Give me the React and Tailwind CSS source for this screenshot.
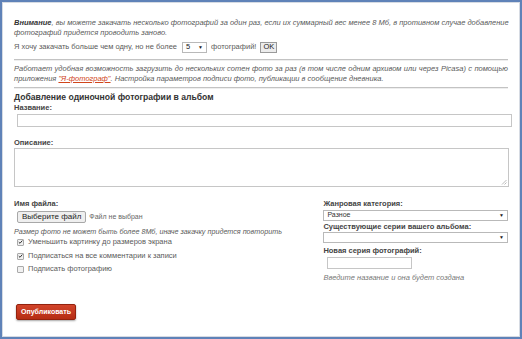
import React from "react";

function Check({ checked }) {
  return (
    <span className="inline-flex w-[7px] h-[7px] border border-[#a9a9a9] bg-[#f1f1f1] rounded-[1px] items-center justify-center shrink-0">
      {checked && (
        <svg width="6" height="6" viewBox="0 0 10 10">
          <path d="M1.5 5.2 L4 7.6 L8.6 2.2" fill="none" stroke="#333" strokeWidth="2" />
        </svg>
      )}
    </span>
  );
}

function Sel({ children, className }) {
  return (
    <div className={"flex items-center justify-between border border-[#b9b9b9] bg-white px-[3px] " + className}>
      <span>{children}</span>
      <span className="text-[5px] text-[#222]">▼</span>
    </div>
  );
}

export default function App() {
  const f = { fontFamily: '"Liberation Sans", Arial, sans-serif' };
  return (
    <div className="w-[522px] h-[339px] bg-white border-2 border-[#5f82b8]" style={f}>
      <div className="h-full border border-[#d6dbe3] bg-white">
        <div className="ml-[11px] w-[494px] pt-[15px] text-[#5a5a5a] text-[7.5px]">
          <div className="italic leading-[10px] h-[10px] whitespace-nowrap text-justify [text-align-last:justify]">
            <b className="text-[#333]">Внимание</b>, вы можете закачать несколько фотографий за один раз, если их суммарный вес менее 8 Мб, в противном случае добавление
          </div>
          <div className="italic leading-[10px] h-[10px]">фотографий придется проводить заново.</div>

          <div className="mt-[4px] flex items-center h-[10px] leading-[10px]">
            <span>Я хочу закачать больше чем одну, но не более</span>
            <Sel className="ml-[5px] w-[25px] h-[11px] text-[#222]">5</Sel>
            <span className="ml-[4px]">фотографий!</span>
            <span className="ml-[4px] h-[11px] px-[2px] border border-[#9a9a9a] bg-[#ececec] text-[#222] flex items-center">OK</span>
          </div>

          <div className="mt-[7px] border-t border-[#c3c3c3] shadow-[0_1px_0_#eeeeee]" />

          <div className="mt-[4px] italic leading-[10px] h-[10px] whitespace-nowrap text-justify [text-align-last:justify]">
            Работает удобная возможность загрузить до нескольких сотен фото за раз (в том числе одним архивом или через Picasa) с помощью
          </div>
          <div className="italic leading-[10px] h-[10px]">
            приложения <span className="underline text-[#d0451b]">"Я-фотограф"</span>. Настройка параметров подписи фото, публикации в сообщение дневника.
          </div>

          <div className="mt-[3px] border-t border-[#c3c3c3] shadow-[0_1px_0_#eeeeee]" />

          <div className="mt-[4px] h-[11px] leading-[11px] text-[8.6px] font-bold text-[#333]">
            Добавление одиночной фотографии в альбом
          </div>
          <div className="h-[9px] leading-[9px] font-bold text-[#444]">Название:</div>
          <div className="mt-[2px] ml-[3px] w-[495px] h-[13px] border border-[#c6c6c6] bg-white" />

          <div className="mt-[11px] h-[9px] leading-[9px] font-bold text-[#444]">Описание:</div>
          <div className="mt-[1px] w-[495px] h-[39px] border border-[#c6c6c6] bg-white flex items-end justify-end">
            <svg width="6" height="6" viewBox="0 0 6 6" className="mr-[1px] mb-[1px]">
              <path d="M5.5 1 L1 5.5 M5.5 3.5 L3.5 5.5" stroke="#aaa" strokeWidth="0.8" />
            </svg>
          </div>

          <div className="flex">
            <div className="w-[310px]">
              <div className="mt-[12px] h-[9px] leading-[9px] font-bold text-[#444]">Имя файла:</div>
              <div className="mt-[3px] flex items-center h-[12px]">
                <span className="ml-[3px] h-[12px] px-[4px] border border-[#a8a8a8] rounded-[2px] bg-[#efefef] text-[#222] text-[8px] flex items-center">Выберите файл</span>
                <span className="ml-[3px] text-[#666] text-[7px]">Файл не выбран</span>
              </div>
              <div className="mt-[4px] h-[10px] leading-[10px] italic text-[7.2px]">
                Размер фото не может быть более 8Мб, иначе закачку придется повторить
              </div>
              <div className="h-[10px] flex items-center ml-[3px] gap-[4px]">
                <Check checked /> <span>Уменьшить картинку до размеров экрана</span>
              </div>
              <div className="mt-[4px] h-[10px] flex items-center ml-[3px] gap-[4px]">
                <Check checked /> <span>Подписаться на все комментарии к записи</span>
              </div>
              <div className="mt-[3px] h-[10px] flex items-center ml-[3px] gap-[4px]">
                <Check /> <span>Подписать фотографию</span>
              </div>
              <div className="mt-[30px] ml-[2px] inline-flex items-center h-[16px] px-[4px] rounded-[2px] border border-[#93220e] bg-gradient-to-b from-[#d2442a] to-[#b52c13] text-white font-bold text-[7px] shadow-[0_1px_2px_rgba(0,0,0,0.35)]">
                Опубликовать
              </div>
            </div>
            <div className="w-[185px]">
              <div className="mt-[12px] h-[9px] leading-[9px] font-bold text-[#444]">Жанровая категория:</div>
              <Sel className="mt-[2px] h-[11px] text-[#333] text-[7px]">Разное</Sel>
              <div className="mt-[1px] h-[9px] leading-[9px] font-bold text-[#444]">Существующие серии вашего альбома:</div>
              <Sel className="mt-[1px] h-[11px]"></Sel>
              <div className="mt-[3px] h-[9px] leading-[9px] font-bold text-[#444]">Новая серия фотографий:</div>
              <div className="mt-[2px] ml-[4px] w-[85px] h-[12px] border border-[#c6c6c6] bg-white" />
              <div className="mt-[4px] h-[10px] leading-[10px] italic text-[#777]">Введите название и она будет создана</div>
            </div>
          </div>
        </div>
      </div>
    </div>
  );
}
